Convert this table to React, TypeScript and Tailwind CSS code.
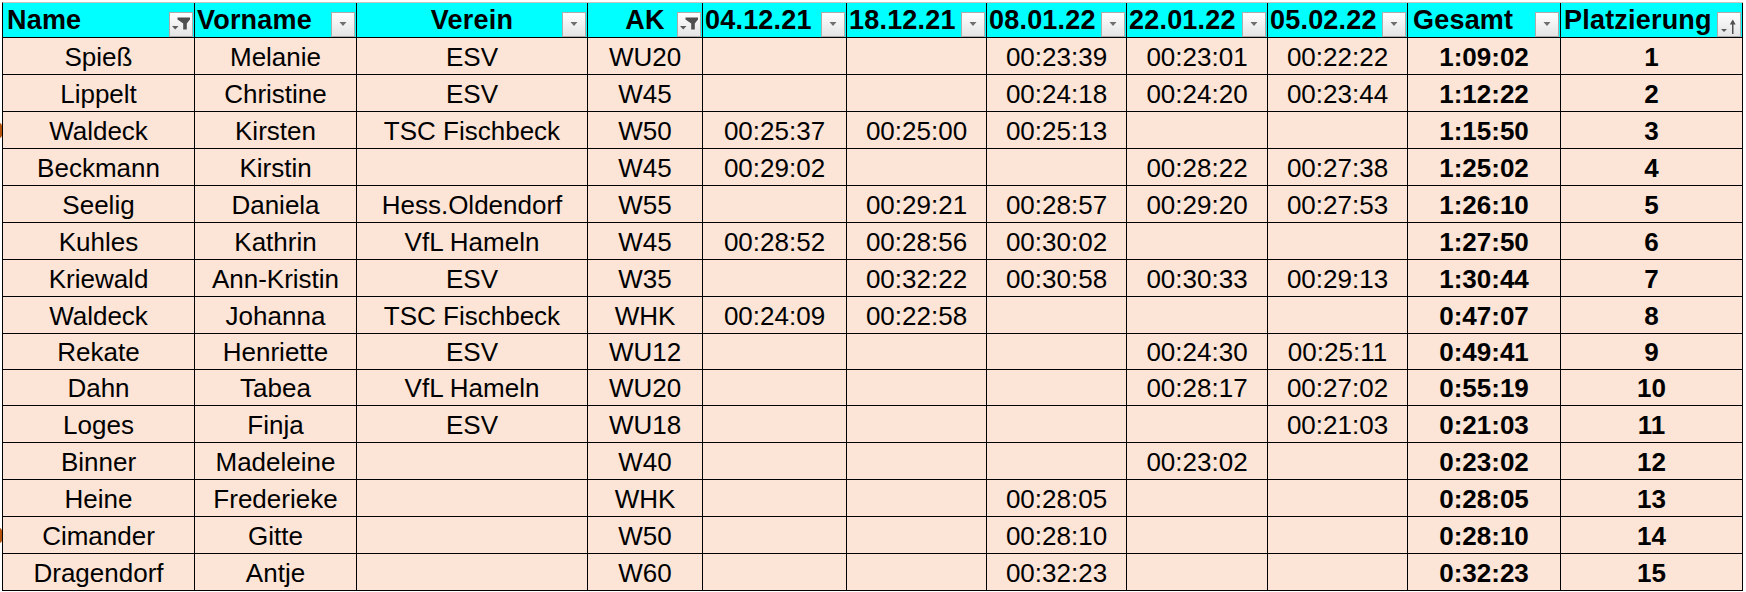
import React from 'react';

type Btn = 'drop' | 'filter' | 'sort';

const cols = [
  'w-[192px]',
  'w-[162px]',
  'w-[231px]',
  'w-[115px]',
  'w-[144px]',
  'w-[140px]',
  'w-[140px]',
  'w-[141px]',
  'w-[140px]',
  'w-[153px]',
  'w-[182px]',
];

const headers: { label: string; btn: Btn; align: string }[] = [
  { label: 'Name', btn: 'filter', align: 'justify-start pl-[4px]' },
  { label: 'Vorname', btn: 'drop', align: 'justify-start pl-[2px]' },
  { label: 'Verein', btn: 'drop', align: 'justify-center' },
  { label: 'AK', btn: 'filter', align: 'justify-center' },
  { label: '04.12.21', btn: 'drop', align: 'justify-start pl-[2px]' },
  { label: '18.12.21', btn: 'drop', align: 'justify-start pl-[2px]' },
  { label: '08.01.22', btn: 'drop', align: 'justify-start pl-[2px]' },
  { label: '22.01.22', btn: 'drop', align: 'justify-start pl-[2px]' },
  { label: '05.02.22', btn: 'drop', align: 'justify-start pl-[2px]' },
  { label: 'Gesamt', btn: 'drop', align: 'justify-start pl-[5px]' },
  { label: 'Platzierung', btn: 'sort', align: 'justify-start pl-[3px]' },
];

const rows: string[][] = [
  ['Spieß', 'Melanie', 'ESV', 'WU20', '', '', '00:23:39', '00:23:01', '00:22:22', '1:09:02', '1'],
  ['Lippelt', 'Christine', 'ESV', 'W45', '', '', '00:24:18', '00:24:20', '00:23:44', '1:12:22', '2'],
  ['Waldeck', 'Kirsten', 'TSC Fischbeck', 'W50', '00:25:37', '00:25:00', '00:25:13', '', '', '1:15:50', '3'],
  ['Beckmann', 'Kirstin', '', 'W45', '00:29:02', '', '', '00:28:22', '00:27:38', '1:25:02', '4'],
  ['Seelig', 'Daniela', 'Hess.Oldendorf', 'W55', '', '00:29:21', '00:28:57', '00:29:20', '00:27:53', '1:26:10', '5'],
  ['Kuhles', 'Kathrin', 'VfL Hameln', 'W45', '00:28:52', '00:28:56', '00:30:02', '', '', '1:27:50', '6'],
  ['Kriewald', 'Ann-Kristin', 'ESV', 'W35', '', '00:32:22', '00:30:58', '00:30:33', '00:29:13', '1:30:44', '7'],
  ['Waldeck', 'Johanna', 'TSC Fischbeck', 'WHK', '00:24:09', '00:22:58', '', '', '', '0:47:07', '8'],
  ['Rekate', 'Henriette', 'ESV', 'WU12', '', '', '', '00:24:30', '00:25:11', '0:49:41', '9'],
  ['Dahn', 'Tabea', 'VfL Hameln', 'WU20', '', '', '', '00:28:17', '00:27:02', '0:55:19', '10'],
  ['Loges', 'Finja', 'ESV', 'WU18', '', '', '', '', '00:21:03', '0:21:03', '11'],
  ['Binner', 'Madeleine', '', 'W40', '', '', '', '00:23:02', '', '0:23:02', '12'],
  ['Heine', 'Frederieke', '', 'WHK', '', '', '00:28:05', '', '', '0:28:05', '13'],
  ['Cimander', 'Gitte', '', 'W50', '', '', '00:28:10', '', '', '0:28:10', '14'],
  ['Dragendorf', 'Antje', '', 'W60', '', '', '00:32:23', '', '', '0:32:23', '15'],
];

// rows 9 and 10 are a pixel shorter in the sheet
const rowH = (i: number) => (i === 8 || i === 9 ? 'h-[36px]' : 'h-[37px]');

// rows whose left edge shows a clipped orange mark
const marked = [2, 13];

const FilterButton = ({ kind }: { kind: Btn }) => (
  <div className="absolute right-[1px] bottom-0 w-[24px] h-[25px] border border-[#ababab] bg-linear-to-b from-white to-[#e4e4e4]">
    <svg width="22" height="23" viewBox="0 0 22 23" className="block">
      {kind === 'drop' && <polygon points="7.5,9 14.5,9 11,13" fill="#6e6e6e" />}
      {kind === 'filter' && (
        <>
          <polygon points="7.5,4.5 20,4.5 20,6.5 16.8,10.5 16.8,16.5 13.2,16.5 13.2,10.5 7.5,6.5" fill="#4f4f4f" />
          <polygon points="2,13 8.5,13 5.2,16.5" fill="#5a5a5a" />
        </>
      )}
      {kind === 'sort' && (
        <>
          <polygon points="3,16 9,16 6,19" fill="#5a5a5a" />
          <rect x="14" y="8" width="1.5" height="13" fill="#505050" />
          <polygon points="11.8,11.5 17.7,11.5 14.75,6.5" fill="#505050" />
        </>
      )}
    </svg>
  </div>
);

export default function App() {
  return (
    <div className="w-[1746px] h-[592px] overflow-hidden bg-white font-['Liberation_Sans',Arial,sans-serif] text-black">
      <div className="mt-[2px] ml-[2px] w-[1741px] border-l border-t border-l-black border-t-[#c6c6c6]">
        <div className="flex h-[35px] bg-[#00ffff] border-b border-black">
          {headers.map((h, i) => (
            <div
              key={i}
              className={`${cols[i]} relative shrink-0 h-full flex items-center border-r border-black ${h.align}`}
            >
              <span className="text-[27px] font-bold leading-none tracking-[0.2px] whitespace-nowrap">{h.label}</span>
              <FilterButton kind={h.btn} />
            </div>
          ))}
        </div>
        {rows.map((r, ri) => (
          <div key={ri} className={`relative flex ${rowH(ri)} bg-[#fce4d6] border-b border-black`}>
            {marked.includes(ri) && (
              <div className="absolute -left-[7px] top-[11px] w-[6px] h-[15px] rounded-full bg-[#b5520c]" />
            )}
            {r.map((c, ci) => (
              <div
                key={ci}
                className={`${cols[ci]} shrink-0 h-full flex items-center justify-center pt-[1px] border-r border-black text-[26px] leading-none whitespace-nowrap ${
                  ci >= 9 ? 'font-bold' : ''
                }`}
              >
                {c}
              </div>
            ))}
          </div>
        ))}
      </div>
    </div>
  );
}
